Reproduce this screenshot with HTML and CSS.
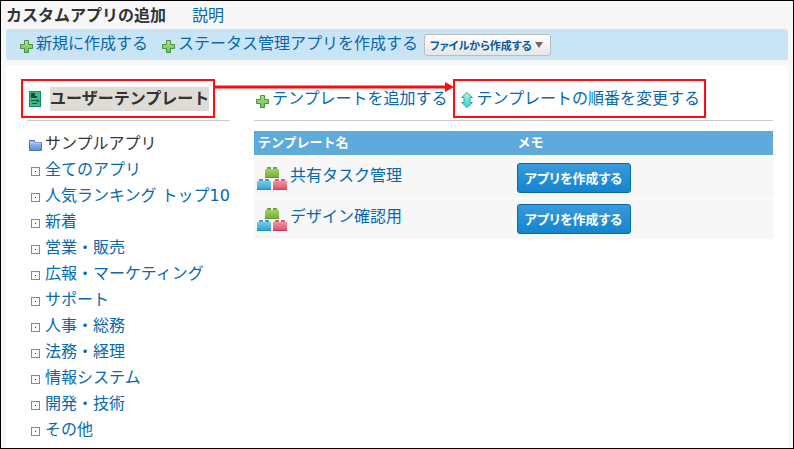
FILE: index.html
```html
<!DOCTYPE html>
<html lang="ja">
<head>
<meta charset="utf-8">
<meta name="viewport" content="width=device-width, initial-scale=1">
<title>カスタムアプリの追加</title>
<link rel="stylesheet" href="styles.css">
</head>
<body>
<svg class="sprites" aria-hidden="true">
  <defs>
    <linearGradient id="g-plus" x1="0" y1="0" x2="0" y2="1"><stop offset="0" stop-color="#b4e08e"/><stop offset="1" stop-color="#6ebc58"/></linearGradient>
    <linearGradient id="g-sort" x1="0" y1="0" x2="0" y2="1"><stop offset="0" stop-color="#b5f3ea"/><stop offset="1" stop-color="#2ed6cc"/></linearGradient>
    <linearGradient id="g-folder" x1="0" y1="0" x2="0" y2="1"><stop offset="0" stop-color="#a9c8ee"/><stop offset="1" stop-color="#5b8fd4"/></linearGradient>
    <linearGradient id="g-green" x1="0" y1="0" x2="0" y2="1"><stop offset="0" stop-color="#a5d069"/><stop offset="1" stop-color="#6fae33"/></linearGradient>
    <linearGradient id="g-blue" x1="0" y1="0" x2="0" y2="1"><stop offset="0" stop-color="#7ccbea"/><stop offset="1" stop-color="#2a9fd2"/></linearGradient>
    <linearGradient id="g-red" x1="0" y1="0" x2="0" y2="1"><stop offset="0" stop-color="#f293a4"/><stop offset="1" stop-color="#dc4f66"/></linearGradient>
  </defs>
  <symbol id="plus" viewBox="0 0 14 14"><path d="M5.500 1.500h4v4h4v4h-4v4h-4v-4h-4v-4h4z" fill="url(#g-plus)" stroke="#46953f"/></symbol>
  <symbol id="blocks" viewBox="0 0 30 23">
    <path d="M10 0h4v2h-4zM16 0h4v2h-4z" fill="#70a044"/><path d="M8 2h14v9H8z" fill="url(#g-green)"/><path d="M8 10h14v1H8z" fill="#5f9a2c"/>
    <path d="M2 12h4v2H2zM8 12h4v2H8z" fill="#3e9cc4"/><path d="M0 14h14v9H0z" fill="url(#g-blue)"/><path d="M0 22h14v1H0z" fill="#238dbf"/>
    <path d="M18 12h4v2h-4zM24 12h4v2h-4z" fill="#d26377"/><path d="M16 14h14v9H16z" fill="url(#g-red)"/><path d="M16 22h14v1H16z" fill="#c73f56"/>
  </symbol>
</svg>
<header class="page-head">
  <h1 class="page-title">カスタムアプリの追加</h1>
  <a class="help" href="#">説明</a>
</header>
<nav class="toolbar">
  <a class="action" href="#"><svg class="icon icon-plus"><use href="#plus"/></svg>新規に作成する</a>
  <a class="action" href="#"><svg class="icon icon-plus"><use href="#plus"/></svg>ステータス管理アプリを作成する</a>
  <button class="file-button" type="button">ファイルから作成する<svg class="caret" viewBox="0 0 8 6"><path d="M0 0h8L4 6z" fill="#6b6b6b"/></svg></button>
</nav>
<main class="panel">
  <aside class="side">
    <div class="bar">
      <h2 class="side-title marked">
        <svg class="icon-book" viewBox="0 0 12 16"><path d="M0 0h12v16H0z" fill="#168a61"/><path d="M1 1h10v14H1z" fill="#3dbb8a"/><path d="M2 2h4v3h2v2H2zM2 9h6v1H2zM3 12h5v1H3z" fill="#174b3c"/><path d="M8 8l3 2-3 2z" fill="#17674e"/></svg>
        <span class="selected">ユーザーテンプレート</span>
        <svg class="arrow" viewBox="0 0 238 10" preserveAspectRatio="none" aria-hidden="true"><path d="M0 3.5h229V0l9 5-9 5V6.500H0z" fill="#fd0d12"/></svg>
      </h2>
    </div>
    <ul class="categories">
      <li class="folder"><svg class="icon-folder" viewBox="0 0 13 12"><path d="M.5 1.500h5v2h7v8H.5z" fill="url(#g-folder)" stroke="#4778b8"/><path d="M1 4h11" stroke="#bcd5f3"/></svg>サンプルアプリ</li>
      <li><a href="#">全てのアプリ</a></li>
      <li><a href="#">人気ランキング トップ10</a></li>
      <li><a href="#">新着</a></li>
      <li><a href="#">営業・販売</a></li>
      <li><a href="#">広報・マーケティング</a></li>
      <li><a href="#">サポート</a></li>
      <li><a href="#">人事・総務</a></li>
      <li><a href="#">法務・経理</a></li>
      <li><a href="#">情報システム</a></li>
      <li><a href="#">開発・技術</a></li>
      <li><a href="#">その他</a></li>
    </ul>
  </aside>
  <section class="content">
    <div class="bar">
      <a class="action" href="#"><svg class="icon icon-plus"><use href="#plus"/></svg>テンプレートを追加する</a>
      <a class="action marked" href="#"><svg class="icon icon-sort" viewBox="0 0 14 18"><path d="M7 1.500l5.500 5H10v5h2.500L7 16.500 1.500 11.500H4v-5H1.500z" fill="url(#g-sort)" stroke="#38a99f" stroke-linejoin="round"/></svg>テンプレートの順番を変更する</a>
    </div>
    <table class="templates">
      <thead><tr><th>テンプレート名</th><th>メモ</th></tr></thead>
      <tbody>
        <tr><td><a class="template" href="#"><svg class="icon-blocks"><use href="#blocks"/></svg>共有タスク管理</a></td><td><button class="create" type="button">アプリを作成する</button></td></tr>
        <tr><td><a class="template" href="#"><svg class="icon-blocks"><use href="#blocks"/></svg>デザイン確認用</a></td><td><button class="create" type="button">アプリを作成する</button></td></tr>
      </tbody>
    </table>
  </section>
</main>
</body>
</html>
```
FILE: styles.css
```css
*, *::before { box-sizing: border-box; }
body {
  display: flex;
  flex-direction: column;
  min-height: 100vh;
  margin: 0;
  padding: 0 5px;
  border: 1px solid #000;
  background: #f7f7f7;
  color: #333;
  font: 16px/24px "DejaVu Sans", "Noto Sans CJK JP", sans-serif;
}
a { color: #0869ae; text-decoration: none; }
h1, h2, ul { margin: 0; padding: 0; }
svg { flex: none; }
.sprites { position: absolute; width: 0; height: 0; }

.page-head { display: flex; gap: 26px; padding: 3px 0 1px; }
.page-title { font-size: 16px; line-height: 24px; }

.toolbar {
  display: flex;
  align-items: center;
  gap: 13px;
  height: 31px;
  padding: 0 13px;
  border-radius: 3px;
  background: #c9e4f5;
}
.action { display: flex; align-items: center; gap: 3px; white-space: nowrap; }
.toolbar .action { padding-bottom: 2px; }
.icon { width: 14px; height: 14px; position: relative; top: 2px; }
.icon-sort { height: 18px; top: 1px; }
.file-button {
  display: flex;
  align-items: center;
  gap: 3px;
  height: 22px;
  margin-left: -7px;
  padding: 0 7px 0 5px;
  border: 1px solid #b9bdc0;
  border-radius: 3px;
  background: linear-gradient(#fff, #e6e6e6);
  color: #075b9d;
  font: bold 11px/20px "Noto Sans CJK JP", sans-serif;
  font-feature-settings: "palt";
  white-space: nowrap;
}
.caret { width: 8px; height: 6px; }

.panel {
  display: grid;
  grid-template-columns: 203px 1fr;
  gap: 24px;
  flex: 1;
  margin-top: 5px;
  padding: 0 15px 4px 21px;
  border-radius: 5px 5px 0 0;
  background: #fff;
}
.bar {
  display: flex;
  align-items: center;
  gap: 6px;
  height: 56px;
  padding-top: 12px;
  border-bottom: 1px solid #ccc;
}
.marked { position: relative; }
.marked::before {
  content: "";
  position: absolute;
  inset: -8px -6px -7px -6px;
  border: 2px solid #fd0d12;
}
.side-title { display: flex; align-items: center; gap: 9px; padding-left: 2px; font-size: 16px; line-height: 24px; white-space: nowrap; }
.icon-book { width: 12px; height: 16px; }
.selected { background: #dfdcd5; }
.arrow { position: absolute; left: calc(100% + 6px); top: -5px; width: 239px; height: 10px; z-index: 1; }
.content .action { padding-left: 1px; }
.content .marked { margin-left: 5px; }

.categories { padding-top: 10px; list-style: none; }
.categories li { display: flex; align-items: center; gap: 5px; height: 26px; padding-left: 4px; white-space: nowrap; }
.categories li:not(.folder)::before {
  content: "";
  flex: none;
  width: 9px;
  height: 9px;
  margin-top: 2px;
  border: 1px solid #888;
  background: linear-gradient(#222, #222) center / 1px 1px no-repeat;
}
.categories .folder { gap: 3px; padding-left: 2px; }
.icon-folder { width: 13px; height: 12px; margin-top: 1px; }

.templates { width: 100%; margin-top: 10px; border-collapse: collapse; table-layout: fixed; }
.templates th { height: 25px; padding: 0 4px; background: #5eaadb; color: #fff; font-size: 13px; line-height: 20px; text-align: left; }
.templates td { height: 41px; padding: 0 3px; border-top: 1px solid #fff; background: #f7f7f7; background-clip: padding-box; }
.templates tbody tr:first-child td { height: 42px; border-top-width: 3px; }
.template { display: flex; align-items: center; gap: 3px; padding-bottom: 3px; }
.icon-blocks { width: 30px; height: 23px; margin-top: 4px; }
.create {
  display: block;
  width: 114px;
  height: 30px;
  padding: 0;
  border: 1px solid #086aad;
  border-radius: 3px;
  background: linear-gradient(#3a9ad9, #1285cf);
  color: #fff;
  font: bold 13px/28px "Noto Sans CJK JP", sans-serif;
  font-feature-settings: "palt";
}
```
